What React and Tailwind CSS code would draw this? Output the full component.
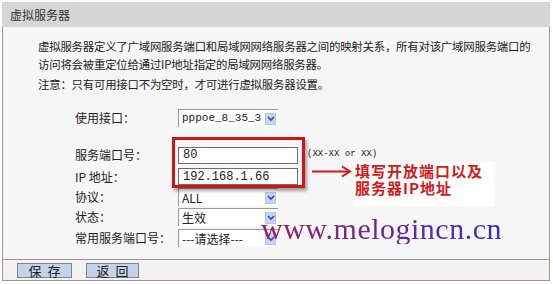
import React from "react";

const CJK = "font-['SimSun','Noto_Sans_CJK_SC',sans-serif]";

function Arrow() {
  return (
    <span className="absolute right-[2px] top-1/2 -translate-y-1/2 w-[11px] h-[12px] bg-[#c6d4f4] border border-[#b4c4ea] flex items-center justify-center">
      <svg width="8" height="6" viewBox="0 0 8 6">
        <path d="M1 1 L4 4 L7 1" stroke="#2c4f9e" strokeWidth="1.6" fill="none" />
      </svg>
    </span>
  );
}

function Select({ children, mono }) {
  return (
    <div className="relative w-[100px] h-[18px] bg-white border-l border-t border-[#9a9a9a] flex items-center pl-[3px]">
      <span className={mono ? "font-['Liberation_Mono',monospace] text-[11px] text-[#222]" : "text-[12px] text-[#222]"}>{children}</span>
      <Arrow />
    </div>
  );
}

function Input({ value }) {
  return (
    <div className="w-[120px] h-[17px] bg-white border border-[#6e6e6e] flex items-center pl-[4px]">
      <span className="font-['Liberation_Mono',monospace] text-[12px] text-[#222] leading-none">{value}</span>
    </div>
  );
}

function Row({ label, h, mt, children }) {
  return (
    <div className="flex items-center" style={{ height: h, marginTop: mt }}>
      <div className="w-[103px] text-[12px] text-[#222]">{label}</div>
      {children}
    </div>
  );
}

export default function App() {
  return (
    <div className={`relative w-[553px] h-[284px] bg-white pt-[2px] pl-[2px] ${CJK}`}>
      <div className="w-[548px] h-[25px] bg-[#d6d6d6] flex items-center pl-[8px] text-[12px] text-[#333]">
        虚拟服务器
      </div>
      <div className="w-[548px] border-x border-b border-[#ad8f8f] bg-[#f6f6f6]">
        <div className="h-[232px] pt-[10px]">
          <div className="pl-[35px] text-[11.4px] leading-[18px] text-[#222] tracking-[-0.2px]">
            <div className="whitespace-nowrap">虚拟服务器定义了广域网服务端口和局域网网络服务器之间的映射关系，所有对该广域网服务端口的</div>
            <div className="whitespace-nowrap">访问将会被重定位给通过IP地址指定的局域网网络服务器。</div>
            <div className="whitespace-nowrap mt-[2px]">注意：只有可用接口不为空时，才可进行虚拟服务器设置。</div>
          </div>
          <div className="pl-[72px] mt-[15px]">
            <Row label="使用接口：" h={20} mt={0}>
              <Select mono>pppoe_8_35_3</Select>
            </Row>
            <Row label="服务端口号：" h={20} mt={17}>
              <Input value="80" />
              <span className="ml-[9px] font-['Liberation_Mono',monospace] text-[9px] text-[#222]">(XX-XX or XX)</span>
            </Row>
            <Row label="IP 地址：" h={21} mt={1}>
              <Input value="192.168.1.66" />
            </Row>
            <Row label="协议：" h={20} mt={0}>
              <Select>ALL</Select>
            </Row>
            <Row label="状态：" h={20} mt={0}>
              <Select>生效</Select>
            </Row>
            <Row label="常用服务端口号：" h={20} mt={1}>
              <Select>---请选择---</Select>
            </Row>
          </div>
        </div>
        <div className="h-[21px] border-t border-[#ad8f8f] bg-[#f2f2f2] flex items-center pl-[14px] gap-[14px]">
          <button className="w-[55px] h-[15px] bg-[#c4d3e8] border border-[#7a8696] text-[13px] leading-none text-[#222] tracking-[6px] pl-[6px]">保存</button>
          <button className="w-[53px] h-[15px] bg-[#c4d3e8] border border-[#7a8696] text-[13px] leading-none text-[#222] tracking-[6px] pl-[6px]">返回</button>
        </div>
      </div>

      <div className="absolute left-[172px] top-[137px] w-[133px] h-[51px] border-[3px] border-[#cf1515] shadow-[2px_3px_3px_rgba(0,0,0,0.35)]" />
      <svg className="absolute left-[311px] top-[165px]" width="42" height="13" viewBox="0 0 42 13">
        <path d="M1 6.5 H38" stroke="#d01818" strokeWidth="2" />
        <path d="M31 1.5 L39 6.5 L31 11.5" stroke="#d01818" strokeWidth="2" fill="none" />
      </svg>
      <div className="absolute left-[353px] top-[162px] w-[142px] h-[45px] bg-white pl-[2px] text-[15px] leading-[17px] tracking-[1px] font-bold text-[#d81818]">
        <div className="h-[17px]">填写开放端口以及</div>
        <div className="h-[17px]">服务器IP地址</div>
      </div>
      <div className="absolute left-[261px] top-[214px] font-['Liberation_Serif',serif] text-[30px] leading-none tracking-[0.5px] bg-gradient-to-r from-[#a01850] via-[#7020a0] to-[#3030c8] bg-clip-text text-transparent">
        www.melogincn.cn
      </div>
    </div>
  );
}
